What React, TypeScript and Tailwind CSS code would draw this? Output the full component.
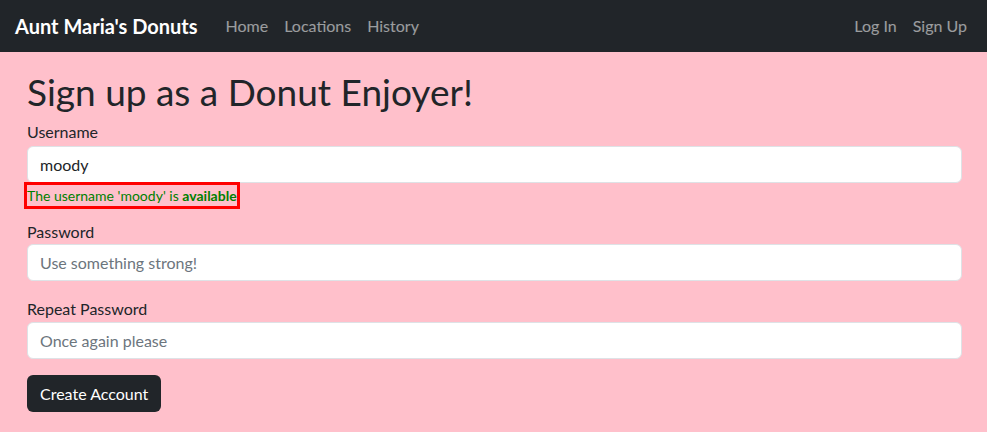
import React, { useState } from "react";

const font = { fontFamily: "Lato, 'Open Sans', sans-serif" };

export default function App() {
  const [username, setUsername] = useState("moody");

  return (
    <div className="min-h-[432px] bg-[#ffc0cb] text-[#212529] text-base" style={font}>
      {/* NAVBAR */}
      <nav className="h-[52px] bg-[#212529] flex items-center justify-between px-[15px]">
        <div className="flex items-center">
          <span className="text-white text-[20px] font-bold mr-[20px]">Aunt Maria's Donuts</span>
          <a className="text-white/55 px-[8px]">Home</a>
          <a className="text-white/55 px-[8px]">Locations</a>
          <a className="text-white/55 px-[8px]">History</a>
        </div>
        <div className="flex items-center">
          <a className="text-white/55 px-[8px]">Log In</a>
          <a className="text-white/55 pl-[8px] pr-[5px]">Sign Up</a>
        </div>
      </nav>

      {/* FORM */}
      <div className="pl-[27px] pr-[25px] pt-[18px]">
        <h1 className="text-[37px] leading-[44px] mb-[6px]">Sign up as a Donut Enjoyer!</h1>

        <form className="flex flex-col">
          <label className="mb-[2px] leading-[24px]">Username</label>
          <input
            value={username}
            onChange={(e) => setUsername(e.target.value)}
            className="h-[37px] w-full bg-white border border-[#dee2e6] rounded-[6px] px-[12px] outline-none"
          />
          <div className="self-start -ml-[3px] -mt-[1px] border-[3px] border-[#ff0000] text-[14px] leading-[21px] text-[#008000] mb-[11px]">
            The username '{username}' is <b>available</b>
          </div>

          <label className="leading-[24px]">Password</label>
          <input
            type="password"
            placeholder="Use something strong!"
            className="h-[37px] w-full bg-white border border-[#dee2e6] rounded-[6px] px-[12px] outline-none placeholder:text-[#6c757d] mb-[16px]"
          />

          <label className="mb-[1px] leading-[24px]">Repeat Password</label>
          <input
            type="password"
            placeholder="Once again please"
            className="h-[37px] w-full bg-white border border-[#dee2e6] rounded-[6px] px-[12px] outline-none placeholder:text-[#6c757d] mb-[16px]"
          />

          <button
            type="button"
            className="self-start h-[37px] px-[13px] bg-[#212529] text-white rounded-[6px]"
          >
            Create Account
          </button>
        </form>
      </div>
    </div>
  );
}
